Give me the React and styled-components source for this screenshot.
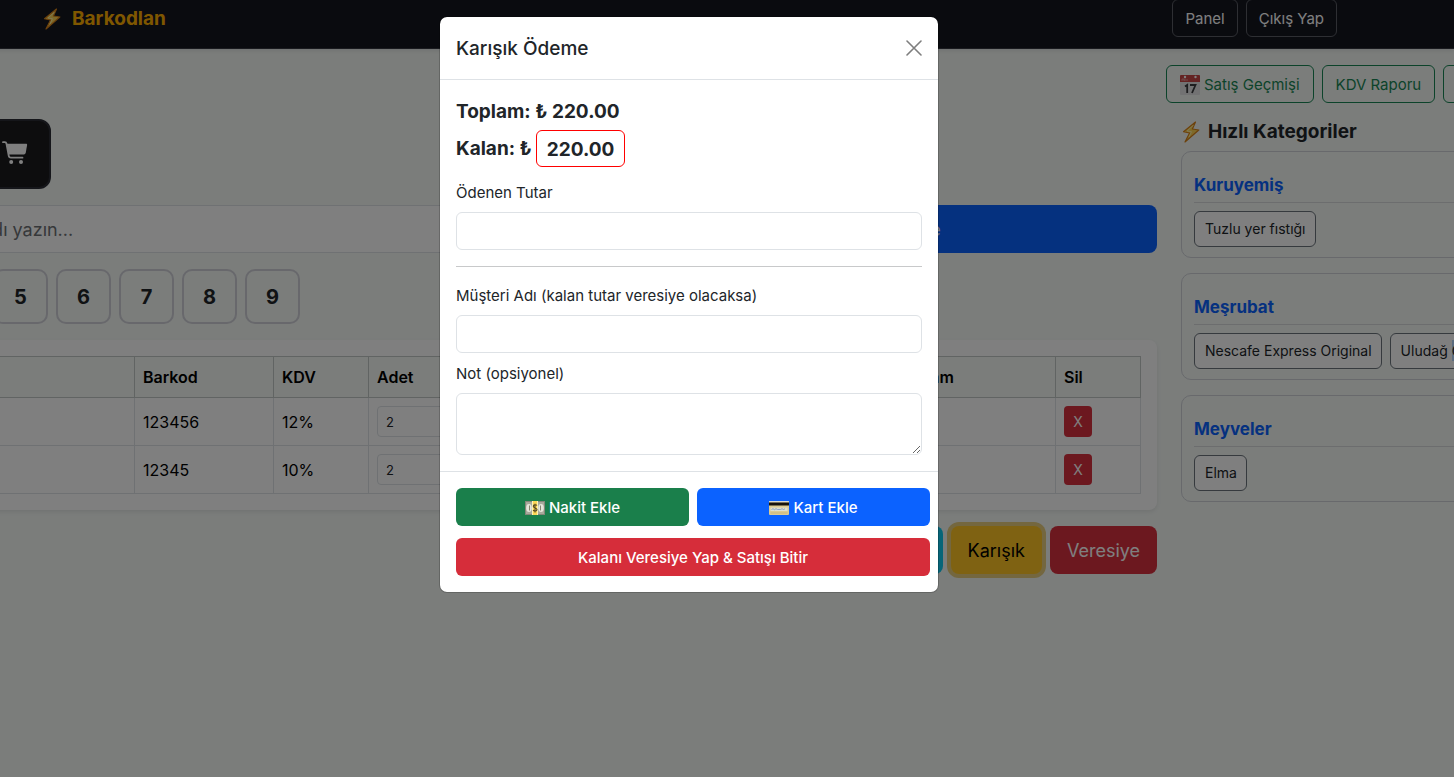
import React from "react";
import styled, { createGlobalStyle, css } from "styled-components";

const GlobalStyle = createGlobalStyle`
  *, *::before, *::after { box-sizing: border-box; }
  html, body, #root { height: 100%; }
  body {
    margin: 0;
    background: #f6faf7;
    color: #212529;
    font-family: Inter, "Liberation Sans", sans-serif;
    font-size: 15px;
    line-height: 24px;
  }
  button, input, textarea { font: inherit; color: inherit; }
  button { cursor: pointer; }
  h1, h2, h3, p { margin: 0; }
`;

const Frame = styled.div`
  position: relative;
  min-height: 100%;
  overflow: hidden;
`;

const Shell = styled.div`
  margin: -12px 0 0 -39px;
`;

const Navbar = styled.header`
  display: flex;
  align-items: center;
  justify-content: space-between;
  height: 61px;
  padding: 0 117px 0 81px;
  background: #14161f;
  border-bottom: 1px solid #34363f;
  box-shadow: 0 2px 4px rgba(0, 0, 0, 0.08);
`;

const Brand = styled.a`
  display: flex;
  align-items: center;
  gap: 10px;
  padding-top: 2px;
  color: #ffaf00;
  font-size: 19px;
  font-weight: 700;
  text-decoration: none;
`;

const NavActions = styled.nav`
  display: flex;
  gap: 8px;
`;

const Button = styled.button`
  display: inline-flex;
  align-items: center;
  justify-content: center;
  gap: 4px;
  height: 38px;
  padding: 2px 12px 0;
  border: 1px solid transparent;
  border-radius: 6px;
  white-space: nowrap;
  color: #fff;
  background: ${(p) => p.$bg || "transparent"};
`;

const NavButton = styled(Button)`
  border-color: #5c5e66;
`;

const OutlineButton = styled(Button)`
  padding: 2px 13px 0;
  color: #198754;
  border-color: #198754;
`;

const LargeButton = styled(Button)`
  height: 48px;
  padding: 2px 16px 0;
  border-radius: 8px;
  font-size: 18px;
  color: ${(p) => p.$color || "#fff"};
  ${(p) => p.$focused && css`box-shadow: 0 0 0 4px rgba(217, 164, 6, 0.5);`}
`;

const Columns = styled.main`
  display: flex;
  align-items: flex-start;
  gap: 9px;
  padding-top: 16px;
`;

const Sale = styled.section`
  flex: 1;
  min-width: 0;
  padding-top: 54px;
`;

const CartButton = styled.button`
  display: flex;
  align-items: center;
  justify-content: center;
  width: 70px;
  height: 70px;
  margin-left: 20px;
  padding: 0;
  border: 2px solid #2b2d35;
  border-radius: 12px;
  background: #1a1a1c;
  color: #fff;
`;

const SearchRow = styled.form`
  display: flex;
  gap: 24px;
  margin-top: 16px;
`;

const SearchInput = styled.input`
  flex: 1;
  min-width: 0;
  height: 48px;
  padding: 0 20px;
  border: 1px solid #dee2e6;
  border-radius: 8px;
  background: #fff;
  font-size: 18px;
  &::placeholder { color: #6d7074; opacity: 1; }
`;

const AddButton = styled(LargeButton)`
  flex: 0 0 468px;
`;

const Digits = styled.div`
  display: flex;
  gap: 8px;
  margin: 16px 0 16px 32px;
`;

const Digit = styled.button`
  width: 55px;
  height: 55px;
  padding: 0;
  border: 2px solid #d0d1d8;
  border-radius: 10px;
  background: transparent;
  font-size: 20px;
  font-weight: 700;
`;

const TableCard = styled.div`
  padding: 16px;
  border-radius: 8px;
  background: #fff;
  box-shadow: 0 2px 4px rgba(0, 0, 0, 0.08);
`;

const Table = styled.table`
  width: 100%;
  table-layout: fixed;
  border-collapse: collapse;
  color: #000;
  font-size: 16px;
`;

const Col = styled.col`
  width: ${(p) => p.$w};
`;

const Th = styled.th`
  height: 41px;
  padding: 0 8px;
  border: 1px solid #c2c8c6;
  background: #f6faf7;
  text-align: left;
  font-weight: 600;
`;

const Td = styled.td`
  height: 48px;
  padding: 0 8px;
  border: 1px solid #dee2e6;
`;

const Quantity = styled.input`
  display: block;
  width: 80px;
  height: 31px;
  padding: 0 8px;
  border: 1px solid #dee2e6;
  border-radius: 4px;
  background: #fff;
  color: #212529;
  font-size: 13px;
`;

const DeleteButton = styled(Button)`
  display: flex;
  width: 28px;
  height: 31px;
  padding: 0;
  border-radius: 4px;
  font-size: 14px;
`;

const PayRow = styled.div`
  display: flex;
  justify-content: flex-end;
  gap: 8px;
  margin-top: 16px;
`;

const Side = styled.aside`
  flex: 0 0 380px;
  margin-right: -92px;
`;

const Reports = styled.div`
  display: flex;
  gap: 8px;
`;

const Categories = styled.div`
  display: flex;
  flex-direction: column;
  gap: 15px;
  padding-left: 15px;
`;

const SideTitle = styled.h2`
  display: flex;
  align-items: center;
  gap: 7px;
  height: 24px;
  margin: 17px 0 -8px;
  font-size: 19px;
  font-weight: 700;
`;

const Category = styled.section`
  height: 107px;
  padding: 20px 12px 0;
  border: 1px solid #d0d3d8;
  border-radius: 10px;
`;

const CategoryTitle = styled.h3`
  padding-bottom: 5px;
  height: 31px;
  border-bottom: 1px solid #d8dbdd;
  color: #0b62ff;
  font-size: 17px;
  font-weight: 700;
  line-height: 26px;
`;

const Products = styled.div`
  display: flex;
  gap: 8px;
  margin-top: 8px;
`;

const Product = styled(Button)`
  height: 36px;
  padding: 0 9px 0 10px;
  gap: 0;
  border-color: #6c757d;
  background: #fff;
  color: #212529;
  font-size: 14px;
`;

const Selected = styled.mark`
  padding: 2px 0;
  background: #b5d7ff;
  color: inherit;
`;

const Overlay = styled.div`
  position: absolute;
  inset: 0;
  display: flex;
  align-items: flex-start;
  justify-content: center;
  padding: 16px 76px 16px 0;
  background: rgba(0, 0, 0, 0.5);
`;

const Dialog = styled.div`
  width: 500px;
  border: 1px solid rgba(0, 0, 0, 0.18);
  border-radius: 8px;
  background: #fff;
  background-clip: padding-box;
`;

const DialogHeader = styled.div`
  display: flex;
  align-items: center;
  justify-content: space-between;
  height: 63px;
  padding: 0 16px;
  border-bottom: 1px solid #dee2e6;
`;

const DialogTitle = styled.h2`
  padding-top: 2px;
  font-size: 19px;
  font-weight: 500;
`;

const CloseButton = styled.button`
  display: flex;
  padding: 0;
  border: 0;
  background: none;
  color: #000;
  opacity: 0.5;
`;

const DialogBody = styled.div`
  padding: 16px;
`;

const Total = styled.p`
  display: flex;
  align-items: center;
  gap: 4px;
  height: 32px;
  margin-bottom: 2px;
  font-size: 19px;
  font-weight: 700;
`;

const RemainingTotal = styled(Total)`
  height: 37px;
  margin-bottom: 13px;
  line-height: 37px;
`;

const Remaining = styled.span`
  height: 37px;
  padding: 0 10px;
  border: 1px solid #f00;
  border-radius: 6px;
`;

const Field = styled.div`
  margin-bottom: ${(p) => p.$mb || "0"};
`;

const Label = styled.label`
  display: block;
  margin-bottom: 6px;
  line-height: 26px;
`;

const Input = styled.input`
  display: block;
  width: 100%;
  height: 38px;
  padding: 0 12px;
  border: 1px solid #dee2e6;
  border-radius: 6px;
  background: #fff;
`;

const TextArea = styled.textarea`
  display: block;
  width: 100%;
  height: 62px;
  padding: 6px 12px;
  border: 1px solid #dee2e6;
  border-radius: 6px;
  background: #fff;
  resize: vertical;
`;

const Divider = styled.hr`
  margin: 16px 0;
  border: 0;
  border-top: 1px solid #c8c9ca;
`;

const DialogFooter = styled.div`
  display: grid;
  grid-template-columns: 1fr 1fr;
  gap: 12px 8px;
  padding: 16px 8px 16px 16px;
  border-top: 1px solid #dee2e6;
`;

const ActionButton = styled(Button)`
  font-weight: 500;
  ${(p) => p.$wide && css`grid-column: 1 / -1;`}
`;

const Bolt = () => (
  <svg width="20" height="22" viewBox="0 0 20 22" aria-hidden="true">
    <path d="M14.5 1 2.5 10.7 8.6 12 4 21 17.8 9 11.4 8Z" fill="#ffd452" stroke="#d98318" strokeWidth="1.2" strokeLinejoin="round" />
    <path d="M12.5 4.2 6 10l4.5.7L8 16" fill="none" stroke="#fff3a6" strokeWidth="1" />
  </svg>
);

const Cart = () => (
  <svg width="28" height="26" viewBox="0 0 28 26" aria-hidden="true">
    <path d="M1 1.200h1.800c1 0 1.500.5 1.700 1.500l2.200 12c.2 1.300 1 2 2.200 2H20.500" fill="none" stroke="currentColor" strokeWidth="1.800" strokeLinecap="round" />
    <path d="M4.700 2.700H24c.8 0 1.200.5 1.100 1.300l-1.300 7.400c-.3 1.400-1.200 2.200-2.700 2.200H6.600Z" fill="currentColor" />
    <circle cx="9.200" cy="21" r="2" fill="currentColor" />
    <circle cx="19" cy="21" r="2" fill="currentColor" />
  </svg>
);

const Calendar = () => (
  <svg width="20" height="20" viewBox="0 0 20 20" aria-hidden="true">
    <rect width="20" height="20" rx="1" fill="#e4e5e7" />
    <path d="M0 1a1 1 0 0 1 1-1h18a1 1 0 0 1 1 1v6H0Z" fill="#c94747" />
    <path d="M2 6V4h2v2M5 6V3.500M7 6V4" fill="none" stroke="#e9a5a5" strokeWidth=".8" />
    <circle cx="5" cy="2" r="1.200" fill="#fff" />
    <circle cx="15.500" cy="2" r="1.200" fill="#fff" />
    <path d="m5 11.500 2.200-1.500v8M10 10h5.500l-3.500 8" fill="none" stroke="#3a3b3e" strokeWidth="1.800" />
  </svg>
);

const Cash = () => (
  <svg width="20" height="14" viewBox="0 0 20 14" aria-hidden="true">
    <rect width="20" height="14" fill="#85877a" />
    <rect x="1" y="1" width="18" height="12" fill="#a9aa9c" />
    <ellipse cx="4" cy="7" rx="2.800" ry="4" fill="#e6e5da" />
    <ellipse cx="16" cy="7" rx="2.800" ry="4" fill="#e6e5da" />
    <path d="M4.500 4.500v5M15.500 4.500v5" stroke="#85866f" />
    <rect x="7" width="6" height="14" fill="#fbd657" />
    <rect x="7" width="1" height="14" fill="#fff1b4" />
    <rect x="12" width="1" height="14" fill="#fff1b4" />
    <path d="M12 4.500c-.8-1-3.700-1-3.700.8 0 2 3.700 1.200 3.700 3.200 0 1.800-3 1.900-3.900.6M10 2.800v8.600" fill="none" stroke="#594a21" strokeWidth="1.100" />
  </svg>
);

const Card = () => (
  <svg width="20" height="14" viewBox="0 0 20 14" aria-hidden="true">
    <rect width="20" height="14" rx="1" fill="#dccb92" />
    <rect width="20" height="1.500" rx=".7" fill="#d8d8cf" />
    <rect y="1.500" width="20" height="3" fill="#15120d" />
    <rect x="1.500" y="6.500" width="17" height="3.500" fill="#dfe0cf" />
    <path d="m2.500 8.500 1.500-.8 1.500 1 1.500-1 1.500.8h3l1.500-.8 1.500.8 1.500-.7" fill="none" stroke="#7a96c8" strokeWidth=".8" />
    <path d="M1.500 12h17" stroke="#c3b078" strokeWidth=".8" />
  </svg>
);

const CloseIcon = () => (
  <svg width="16" height="16" viewBox="0 0 16 16" aria-hidden="true">
    <path d="m1 1 14 14M15 1 1 15" fill="none" stroke="currentColor" strokeWidth="1.600" strokeLinecap="round" />
  </svg>
);

const rows = [
  { barcode: "123456", vat: "12%", quantity: 2 },
  { barcode: "12345", vat: "10%", quantity: 2 },
];

export default function App() {
  return (
    <Frame>
      <GlobalStyle />
      <Shell>
        <Navbar>
          <Brand href="#"><Bolt /> Barkodlan</Brand>
          <NavActions>
            <NavButton type="button">Panel</NavButton>
            <NavButton type="button">Çıkış Yap</NavButton>
          </NavActions>
        </Navbar>
        <Columns>
          <Sale>
            <CartButton type="button" aria-label="Sepet"><Cart /></CartButton>
            <SearchRow onSubmit={(e) => e.preventDefault()}>
              <SearchInput aria-label="Ürün" placeholder="adı yazın..." />
              <AddButton type="submit" $bg="#0b62ff">Ekle</AddButton>
            </SearchRow>
            <Digits>
              {[5, 6, 7, 8, 9].map((n) => <Digit type="button" key={n}>{n}</Digit>)}
            </Digits>
            <TableCard>
              <Table>
                <colgroup>
                  <Col $w="157px" /><Col $w="139px" /><Col $w="95px" />
                  <Col /><Col $w="167px" /><Col $w="85px" />
                </colgroup>
                <thead>
                  <tr>
                    <Th /><Th>Barkod</Th><Th>KDV</Th><Th>Adet</Th><Th>Toplam</Th><Th>Sil</Th>
                  </tr>
                </thead>
                <tbody>
                  {rows.map((r) => (
                    <tr key={r.barcode}>
                      <Td /><Td>{r.barcode}</Td><Td>{r.vat}</Td>
                      <Td><Quantity aria-label="Adet" defaultValue={r.quantity} /></Td>
                      <Td />
                      <Td><DeleteButton type="button" $bg="#d9303e">X</DeleteButton></Td>
                    </tr>
                  ))}
                </tbody>
              </Table>
            </TableCard>
            <PayRow>
              <LargeButton type="button" $bg="#0dcaf0" $color="#000">Kart</LargeButton>
              <LargeButton type="button" $bg="#ffc524" $color="#000" $focused>Karışık</LargeButton>
              <LargeButton type="button" $bg="#d9303e">Veresiye</LargeButton>
            </PayRow>
          </Sale>
          <Side>
            <Reports>
              <OutlineButton type="button"><Calendar /> Satış Geçmişi</OutlineButton>
              <OutlineButton type="button">KDV Raporu</OutlineButton>
              <OutlineButton type="button" aria-label="Diğer raporlar" />
            </Reports>
            <Categories>
              <SideTitle><Bolt /> Hızlı Kategoriler</SideTitle>
              <Category>
                <CategoryTitle>Kuruyemiş</CategoryTitle>
                <Products><Product type="button">Tuzlu yer fıstığı</Product></Products>
              </Category>
              <Category>
                <CategoryTitle>Meşrubat</CategoryTitle>
                <Products>
                  <Product type="button">Nescafe Express Original</Product>
                  <Product type="button"><span>Uludağ <Selected>Gazoz</Selected></span></Product>
                </Products>
              </Category>
              <Category>
                <CategoryTitle>Meyveler</CategoryTitle>
                <Products><Product type="button">Elma</Product></Products>
              </Category>
            </Categories>
          </Side>
        </Columns>
      </Shell>
      <Overlay>
        <Dialog role="dialog" aria-modal="true" aria-labelledby="dialog-title">
          <DialogHeader>
            <DialogTitle id="dialog-title">Karışık Ödeme</DialogTitle>
            <CloseButton type="button" aria-label="Kapat"><CloseIcon /></CloseButton>
          </DialogHeader>
          <DialogBody>
            <Total>Toplam: ₺ 220.00</Total>
            <RemainingTotal>Kalan: ₺ <Remaining>220.00</Remaining></RemainingTotal>
            <Field>
              <Label htmlFor="paid">Ödenen Tutar</Label>
              <Input id="paid" type="text" inputMode="decimal" />
            </Field>
            <Divider />
            <Field $mb="8px">
              <Label htmlFor="customer">Müşteri Adı (kalan tutar veresiye olacaksa)</Label>
              <Input id="customer" type="text" />
            </Field>
            <Field>
              <Label htmlFor="note">Not (opsiyonel)</Label>
              <TextArea id="note" />
            </Field>
          </DialogBody>
          <DialogFooter>
            <ActionButton type="button" $bg="#1a7f4b"><Cash /> Nakit Ekle</ActionButton>
            <ActionButton type="button" $bg="#0b62ff"><Card /> Kart Ekle</ActionButton>
            <ActionButton type="button" $bg="#d62d3a" $wide>Kalanı Veresiye Yap &amp; Satışı Bitir</ActionButton>
          </DialogFooter>
        </Dialog>
      </Overlay>
    </Frame>
  );
}
